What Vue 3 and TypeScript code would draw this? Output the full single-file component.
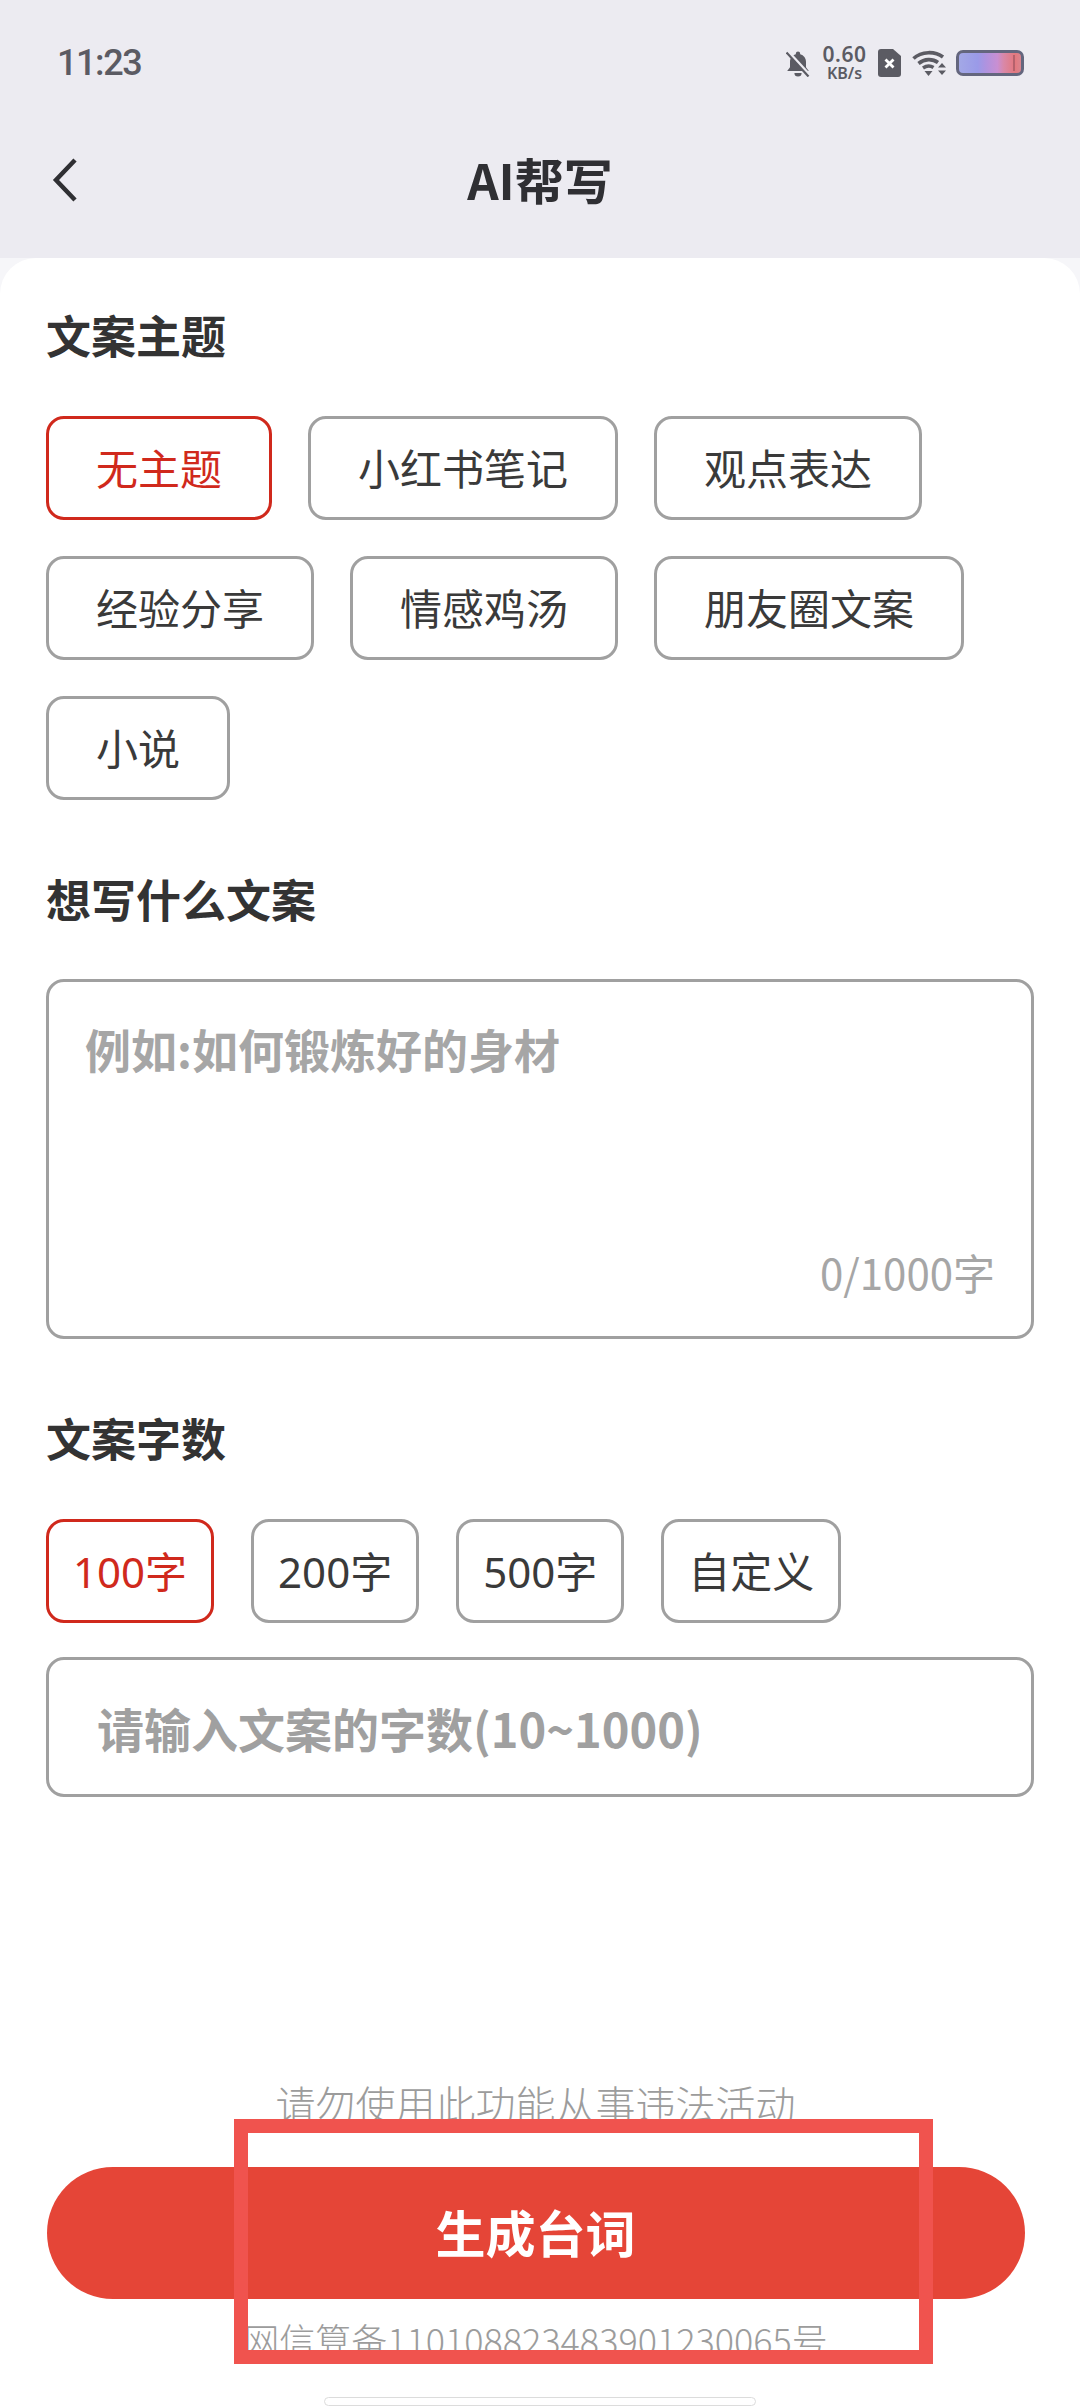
<template>
  <div class="page">
    <div class="status-bar">
      <span class="status-bar__time">11:23</span>
      <div class="status-bar__icons">
        <svg class="icon-bell" viewBox="0 0 24 27" aria-hidden="true">
          <path d="M12 1.500a2.200 2.200 0 0 1 2.200 2.200v.6c3.600 1 5.800 4 5.800 7.800v5.200l2.800 3.700H1.200L4 17.300v-5.200c0-3.800 2.200-6.800 5.800-7.800v-.6A2.200 2.200 0 0 1 12 1.500z" fill="#5b5b63" />
          <path d="M8.400 23a3.600 3.600 0 0 0 7.200 0z" fill="#5b5b63" />
          <path d="M2 1.500 23.500 25" stroke="#ecebf1" stroke-width="3" />
          <path d="M.5 2.500 22.500 26.500" stroke="#5b5b63" stroke-width="2.200" />
        </svg>
        <div class="speed">
          <span class="speed__value">0.60</span>
          <span class="speed__unit">KB/s</span>
        </div>
        <svg class="icon-sim" viewBox="0 0 23 28" aria-hidden="true">
          <path d="M3 0h12l8 7v18a3 3 0 0 1-3 3H3a3 3 0 0 1-3-3V3a3 3 0 0 1 3-3z" fill="#5b5b63" />
          <path d="M7.500 10.500l8 8M15.500 10.500l-8 8" stroke="#fff" stroke-width="2.800" />
        </svg>
        <svg class="icon-wifi" viewBox="0 0 35 26" aria-hidden="true">
          <path d="M1.500 8.500C9.500 1 23 1 31 7" fill="none" stroke="#5b5b63" stroke-width="3.600" />
          <path d="M6.500 13.500c6-5 14-5 19.500-1" fill="none" stroke="#5b5b63" stroke-width="3.600" />
          <path d="M11 18c3.500-2.500 7.500-2.500 10.500-.5" fill="none" stroke="#5b5b63" stroke-width="3.400" />
          <path d="M12.500 21h8l-4 5z" fill="#5b5b63" />
          <path d="M30 13l4 4.500h-8zM30 25l-4-4.500h8z" fill="#5b5b63" />
        </svg>
        <div class="battery"><span class="battery__tip"></span></div>
      </div>
    </div>

    <header class="nav">
      <svg class="nav__back" viewBox="0 0 26 44" aria-hidden="true">
        <path d="M23 2 4 22l19 20" fill="none" stroke="#2f2f33" stroke-width="4.500" />
      </svg>
      <h1 class="nav__title">AI帮写</h1>
    </header>

    <main class="card">
      <h2 class="section-title">文案主题</h2>
      <div class="chips chips--topic">
        <span
          v-for="topic in topics"
          :key="topic"
          class="chip"
          :class="{ 'chip--active': topic === '无主题' }"
        >{{ topic }}</span>
      </div>

      <h2 class="section-title section-title--spaced">想写什么文案</h2>
      <div class="textarea">
        <span class="textarea__placeholder">例如:如何锻炼好的身材</span>
        <span class="textarea__count">0/1000字</span>
      </div>

      <h2 class="section-title section-title--spaced">文案字数</h2>
      <div class="chips chips--count">
        <span
          v-for="count in counts"
          :key="count"
          class="chip chip--small"
          :class="{ 'chip--active': count === '100字' }"
        >{{ count }}</span>
      </div>
      <div class="count-input">请输入文案的字数(10~1000)</div>

      <footer class="footer">
        <p class="footer__warning">请勿使用此功能从事违法活动</p>
        <button type="button" class="footer__button">生成台词</button>
        <p class="footer__record">网信算备110108823483901230065号</p>
      </footer>
    </main>

    <div class="highlight" aria-hidden="true"></div>
    <div class="home-bar" aria-hidden="true"></div>
  </div>
</template>

<script setup lang="ts">
const topics: string[] = ['无主题', '小红书笔记', '观点表达', '经验分享', '情感鸡汤', '朋友圈文案', '小说'];
const counts: string[] = ['100字', '200字', '500字', '自定义'];
</script>

<style>
html,
body {
  margin: 0;
  background: #ffffff;
}
</style>

<style scoped>
.page {
  position: relative;
  display: flex;
  flex-direction: column;
  width: 1080px;
  height: 2408px;
  overflow: hidden;
  background: #f6f6f9;
  font-family: 'Noto Sans CJK SC', 'Noto Sans', sans-serif;
  color: #333333;
}

.status-bar {
  display: flex;
  align-items: center;
  justify-content: space-between;
  height: 126px;
  padding: 0 56px 0 57px;
  box-sizing: border-box;
  background: #ecebf1;
}

.status-bar__time {
  font-family: Roboto, sans-serif;
  font-size: 36px;
  font-weight: 500;
  letter-spacing: -1.4px;
  color: #5b5b63;
}

.status-bar__icons {
  display: flex;
  align-items: center;
}

.icon-bell {
  width: 24px;
  height: 27px;
  margin-right: 12px;
}

.speed {
  display: flex;
  flex-direction: column;
  align-items: center;
  width: 45px;
  font-family: 'Noto Sans', sans-serif;
  color: #5b5b63;
  font-weight: 600;
}

.speed__value {
  font-size: 21px;
  line-height: 20px;
  letter-spacing: 0.5px;
}

.speed__unit {
  font-size: 16px;
  line-height: 18px;
}

.icon-sim {
  width: 23px;
  height: 28px;
  margin-left: 11px;
}

.icon-wifi {
  width: 35px;
  height: 26px;
  margin-left: 11px;
}

.battery {
  position: relative;
  width: 68px;
  height: 26px;
  margin-left: 9px;
  box-sizing: border-box;
  border: 3px solid #64667e;
  border-radius: 7px;
  background: linear-gradient(90deg, #a3a8e6 0%, #9a9ae8 30%, #ad93e0 42%, #c98fd2 62%, #d988a8 72%, #e3787e 90%, #d9848e 100%);
}

.battery__tip {
  position: absolute;
  top: 2px;
  right: 6px;
  bottom: 2px;
  width: 2px;
  background: #b5616c;
}

.nav {
  position: relative;
  display: flex;
  align-items: center;
  justify-content: center;
  height: 132px;
  flex-shrink: 0;
  background: #ecebf1;
}

.nav__back {
  position: absolute;
  left: 52px;
  top: 32px;
  width: 26px;
  height: 44px;
}

.nav__title {
  margin: 0 0 28px;
  font-size: 49px;
  font-weight: 700;
  color: #2f2f33;
}

.card {
  display: flex;
  flex-direction: column;
  flex: 1;
  padding: 47px 46px 0;
  border-radius: 36px 36px 0 0;
  background: #ffffff;
}

.section-title {
  margin: 0;
  font-size: 45px;
  font-weight: 700;
  line-height: 60px;
  color: #333333;
}

.section-title--spaced {
  margin-top: 69px;
}

.chips {
  display: flex;
  flex-wrap: wrap;
  gap: 36px;
  margin-top: 51px;
}

.chips--count {
  gap: 37px;
}

.chip {
  display: flex;
  align-items: center;
  height: 104px;
  padding: 0 47px 3px;
  box-sizing: border-box;
  border: 3px solid #a0a0a0;
  border-radius: 18px;
  font-size: 42px;
  color: #3a3a3a;
}

.chip--small {
  padding: 0 24px 3px;
  font-family: 'Noto Sans', 'Noto Sans CJK SC', sans-serif;
}

.chip--active {
  border-color: #d0291c;
  color: #d0291c;
}

.textarea {
  display: flex;
  flex-direction: column;
  justify-content: space-between;
  height: 360px;
  margin-top: 50px;
  padding: 36px 36px 38px;
  box-sizing: border-box;
  border: 3px solid #a0a0a0;
  border-radius: 18px;
}

.textarea__placeholder {
  font-size: 46px;
  font-weight: 700;
  line-height: 60px;
  color: #a6a6a6;
}

.textarea__count {
  align-self: flex-end;
  font-size: 42px;
  line-height: 52px;
  color: #a6a6a6;
}

.count-input {
  display: flex;
  align-items: center;
  height: 140px;
  margin-top: 34px;
  padding-left: 48px;
  box-sizing: border-box;
  border: 3px solid #a0a0a0;
  border-radius: 18px;
  font-size: 47px;
  font-weight: 700;
  color: #a0a0a0;
}

.footer {
  display: flex;
  flex-direction: column;
  align-items: center;
  margin-top: auto;
  height: 329px;
  margin-right: 9px;
}

.footer__warning {
  margin: 0;
  font-size: 40px;
  font-weight: 300;
  line-height: 48px;
  color: #9c9c9c;
}

.footer__button {
  width: 978px;
  height: 132px;
  flex-shrink: 0;
  margin-top: 40px;
  padding: 0 0 4px;
  border: none;
  border-radius: 66px;
  background: #e54537;
  color: #ffffff;
  font-family: inherit;
  font-size: 50px;
  font-weight: 700;
}

.footer__record {
  margin: 17px 0 0;
  font-size: 36px;
  font-weight: 300;
  line-height: 46px;
  color: #9c9c9c;
  white-space: nowrap;
}

.highlight {
  position: absolute;
  left: 234px;
  top: 2119px;
  width: 699px;
  height: 245px;
  box-sizing: border-box;
  border: 14px solid #f0534e;
}

.home-bar {
  position: absolute;
  left: 324px;
  top: 2397px;
  width: 432px;
  height: 9px;
  box-sizing: border-box;
  border: 1px solid #dcdcdc;
  border-radius: 5px;
  background: #ffffff;
}
</style>
